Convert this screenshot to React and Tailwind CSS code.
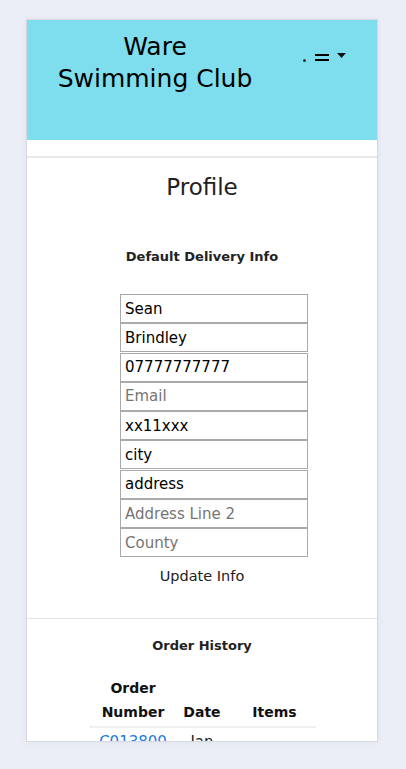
export default function App() {
  const fields = [
    { v: "Sean" },
    { v: "Brindley" },
    { v: "07777777777" },
    { p: "Email" },
    { v: "xx11xxx" },
    { v: "city" },
    { v: "address" },
    { p: "Address Line 2" },
    { p: "County" },
  ];
  return (
    <div className="min-h-[769px] bg-[#ebeef6] pt-[19px] pl-[26px]" style={{ fontFamily: '"DejaVu Sans", sans-serif' }}>
      <div className="w-[352px] h-[723px] overflow-hidden bg-white border border-[#d6d9df] shadow-[0_0_6px_rgba(0,0,0,0.06)]">
        <div className="h-[120px] bg-[#7fdeed] flex">
          <div className="w-[256px] pt-[11px] text-center text-[25px] leading-[32px] text-black">
            Ware<br />Swimming Club
          </div>
          <div className="flex items-start pt-[33px] pl-[20px] gap-[7px] text-[#111]">
            <div className="w-[3px] h-[3px] rounded-full bg-[#333] mt-[6px]"></div>
            <div className="flex flex-col gap-[3px] mt-[1px] ml-[2px]">
              <div className="w-[14px] h-[2px] bg-black"></div>
              <div className="w-[14px] h-[2px] bg-black"></div>
            </div>
            <svg width="9" height="5" viewBox="0 0 9 5" className="ml-[1px]"><path d="M0 0H9L4.5 5Z" fill="#111" /></svg>
          </div>
        </div>
        <div className="h-[16px]"></div>
        <div className="border-t-2 border-[#e8e8e8]"></div>
        <div className="text-center text-[23px] text-[#222] mt-[15px] leading-[28px]">Profile</div>
        <div className="text-center text-[13px] font-bold text-[#222] mt-[46px] leading-[20px]">Default Delivery Info</div>
        <div className="flex flex-col items-center mt-[27px]">
          {fields.map((f, i) => (
            <input
              key={i}
              readOnly
              defaultValue={f.v || ""}
              placeholder={f.p || ""}
              className="ml-[24px] w-[188px] h-[29px] border border-[#a9a9a9] px-[4px] text-[15px] text-black placeholder:text-[#757575] bg-white outline-none"
              style={{ fontFamily: '"DejaVu Sans", sans-serif', marginTop: i ? 0.3 : 0 }}
            />
          ))}
          <div className="text-[14.5px] text-[#222] mt-[9px] leading-[20px]">Update Info</div>
        </div>
        <div className="border-t border-[#e5e5e5] mt-[32px]"></div>
        <div className="text-center text-[13px] font-bold text-[#222] mt-[17px] leading-[20px]">Order History</div>
        <div className="mt-[20px] ml-[62px] w-[227px]">
          <div className="flex items-end text-[14px] font-bold text-[#111] leading-[24px] pb-[2px] border-b-2 border-[#f0f0f0]">
            <div className="w-[88px] text-center">Order<br />Number</div>
            <div className="w-[50px] text-center">Date</div>
            <div className="flex-1 text-center pl-[6px]">Items</div>
          </div>
          <div className="flex text-[15px] leading-[24px] pt-[2px]">
            <div className="w-[88px] text-center text-[#1e7be0] underline">C013800</div>
            <div className="w-[50px] text-center text-[#222]">Jan</div>
          </div>
        </div>
      </div>
    </div>
  );
}
